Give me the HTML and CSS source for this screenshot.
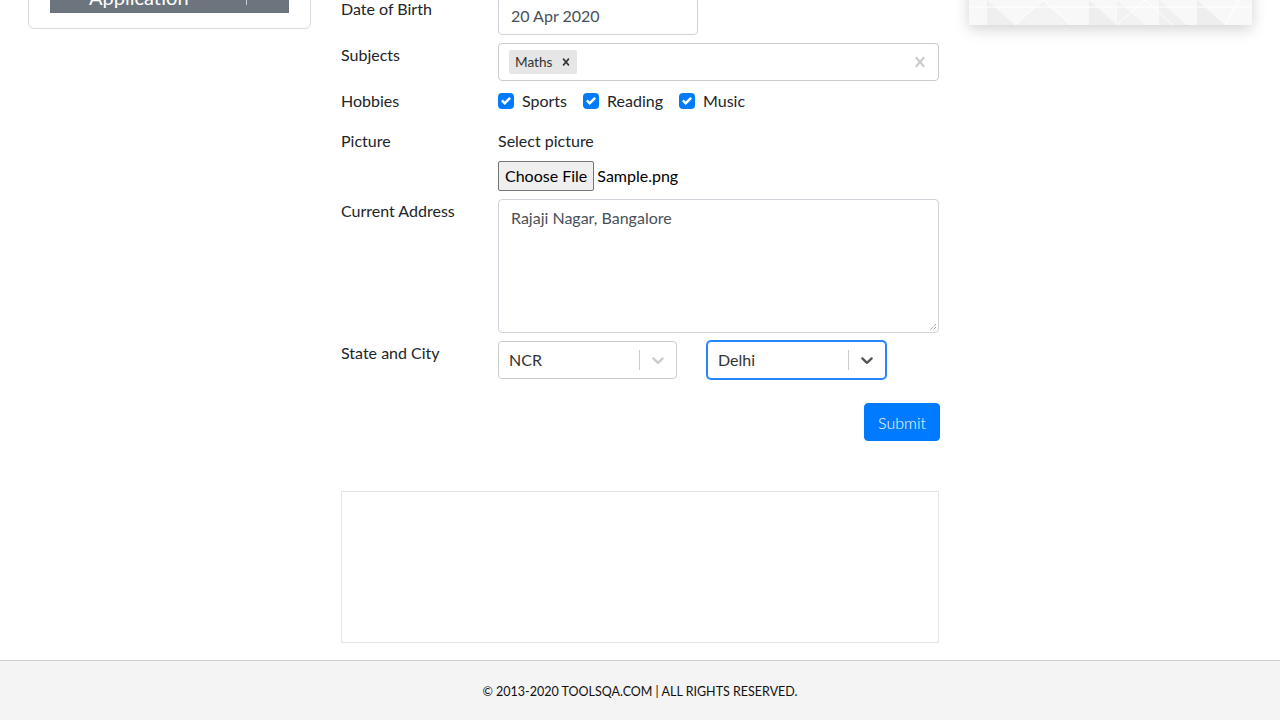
FILE: index.html
```html
<!DOCTYPE html>
<html lang="en">
<head>
<meta charset="utf-8">
<title>Practice Form</title>
<link rel="stylesheet" href="styles.css">
</head>
<body>
<div class="shell">
  <aside class="sidebar">
    <div class="side-card">
      <div class="side-header">
        <span class="side-title">Application</span>
        <span class="side-icon"></span>
      </div>
    </div>
  </aside>

  <main class="main">
    <form class="form">
      <div class="row">
        <label class="lbl">Date of Birth</label>
        <div class="ctl"><div class="input date">20 Apr 2020</div></div>
      </div>

      <div class="row">
        <label class="lbl">Subjects</label>
        <div class="ctl">
          <div class="select multi">
            <div class="values">
              <span class="tag"><span class="tag-label">Maths</span><span class="tag-remove"><svg width="14" height="14" viewBox="0 0 20 20"><path d="M14.348 14.849c-0.469 0.469-1.229 0.469-1.697 0l-2.651-3.030-2.651 3.029c-0.469 0.469-1.229 0.469-1.697 0-0.469-0.469-0.469-1.229 0-1.697l2.758-3.15-2.759-3.152c-0.469-0.469-0.469-1.228 0-1.697s1.228-0.469 1.697 0l2.652 3.031 2.651-3.031c0.469-0.469 1.228-0.469 1.697 0s0.469 1.229 0 1.697l-2.758 3.152 2.758 3.15c0.469 0.469 0.469 1.229 0 1.698z" fill="#333"/></svg></span></span>
            </div>
            <div class="indicator"><svg width="20" height="20" viewBox="0 0 20 20"><path d="M14.348 14.849c-0.469 0.469-1.229 0.469-1.697 0l-2.651-3.030-2.651 3.029c-0.469 0.469-1.229 0.469-1.697 0-0.469-0.469-0.469-1.229 0-1.697l2.758-3.15-2.759-3.152c-0.469-0.469-0.469-1.228 0-1.697s1.228-0.469 1.697 0l2.652 3.031 2.651-3.031c0.469-0.469 1.228-0.469 1.697 0s0.469 1.229 0 1.697l-2.758 3.152 2.758 3.15c0.469 0.469 0.469 1.229 0 1.698z" fill="#ccc"/></svg></div>
          </div>
        </div>
      </div>

      <div class="row row-hobbies">
        <label class="lbl">Hobbies</label>
        <div class="ctl checks">
          <span class="check"><span class="box"><svg width="10" height="10" viewBox="0 0 8 8"><path d="M6.564.75l-3.59 3.612-1.538-1.55L0 4.26 2.974 7.25 8 2.193z" fill="#fff"/></svg></span>Sports</span>
          <span class="check"><span class="box"><svg width="10" height="10" viewBox="0 0 8 8"><path d="M6.564.75l-3.59 3.612-1.538-1.55L0 4.26 2.974 7.25 8 2.193z" fill="#fff"/></svg></span>Reading</span>
          <span class="check"><span class="box"><svg width="10" height="10" viewBox="0 0 8 8"><path d="M6.564.75l-3.59 3.612-1.538-1.55L0 4.26 2.974 7.25 8 2.193z" fill="#fff"/></svg></span>Music</span>
        </div>
      </div>

      <div class="row">
        <label class="lbl">Picture</label>
        <div class="ctl picture">
          <div class="pic-label">Select picture</div>
          <div class="file"><span class="file-btn">Choose File</span><span class="file-name">Sample.png</span></div>
        </div>
      </div>

      <div class="row">
        <label class="lbl">Current Address</label>
        <div class="ctl"><div class="textarea">Rajaji Nagar, Bangalore<svg class="grip" width="9" height="9" viewBox="0 0 9 9"><path d="M8 2 L2 8 M8 5 L5 8" stroke="#777" stroke-width="1" stroke-dasharray="1 1"/></svg></div></div>
      </div>

      <div class="row">
        <label class="lbl">State and City</label>
        <div class="ctl selects">
          <div class="select single">
            <div class="single-value">NCR</div>
            <span class="sep"></span>
            <div class="indicator"><svg width="20" height="20" viewBox="0 0 20 20"><path d="M4.516 7.548c0.436-0.446 1.043-0.481 1.576 0l3.908 3.747 3.908-3.747c0.533-0.481 1.141-0.446 1.574 0 0.436 0.445 0.408 1.197 0 1.615-0.406 0.418-4.695 4.502-4.695 4.502-0.217 0.223-0.502 0.335-0.787 0.335s-0.57-0.112-0.789-0.335c0 0-4.287-4.084-4.695-4.502s-0.436-1.17 0-1.615z" fill="#ccc"/></svg></div>
          </div>
          <div class="select single focused">
            <div class="single-value">Delhi</div>
            <span class="sep"></span>
            <div class="indicator"><svg width="20" height="20" viewBox="0 0 20 20"><path d="M4.516 7.548c0.436-0.446 1.043-0.481 1.576 0l3.908 3.747 3.908-3.747c0.533-0.481 1.141-0.446 1.574 0 0.436 0.445 0.408 1.197 0 1.615-0.406 0.418-4.695 4.502-4.695 4.502-0.217 0.223-0.502 0.335-0.787 0.335s-0.57-0.112-0.789-0.335c0 0-4.287-4.084-4.695-4.502s-0.436-1.17 0-1.615z" fill="#555"/></svg></div>
          </div>
        </div>
      </div>

      <div class="submit-row"><button type="button" class="submit">Submit</button></div>
    </form>
    <div class="ad-box"></div>
  </main>

  <aside class="right">
    <div class="promo">
      <svg class="pattern" width="283" height="68" viewBox="0 0 283 68" preserveAspectRatio="none">
        <rect width="283" height="68" fill="#f8f8f8"/>
        <polygon points="18,43 46,68 18,68" fill="#efefef"/>
        <polygon points="46,68 74,43 102,68" fill="#f3f3f3"/>
        <polygon points="120,43 148,68 120,68" fill="#eeeeee"/>
        <polygon points="148,43 176,68 148,68" fill="#f2f2f2"/>
        <polygon points="190,43 218,68 190,68" fill="#f0f0f0"/>
        <polygon points="228,43 256,68 228,68" fill="#eeeeee"/>
        <path d="M0 50 L283 50 M46 68 L74 43 L102 68 M148 68 L176 43 L204 68 M256 68 L270 43" stroke="#fff" stroke-width="1" fill="none"/>
      </svg>
    </div>
  </aside>
</div>

<footer class="footer">
  <span>© 2013-2020 TOOLSQA.COM | ALL RIGHTS RESERVED.</span>
</footer>
</body>
</html>
```

FILE: styles.css
```css
* { box-sizing: border-box; }
html, body { margin: 0; padding: 0; }
body {
  width: 1280px;
  height: 720px;
  overflow: hidden;
  background: #fff;
  font-family: Lato, "Liberation Sans", sans-serif;
  font-size: 16px;
  color: #212529;
  line-height: 24px;
  display: flex;
  flex-direction: column;
}

.shell {
  display: flex;
  align-items: flex-start;
  gap: 30px;
  padding: 0 28px;
  margin-top: -43px;
  flex: 1;
}

.sidebar { width: 283px; flex: none; }
.side-card {
  border: 1px solid #dcdcdc;
  border-radius: 6px;
  padding: 15px 21px;
}
.side-header {
  height: 40px;
  background: #6c757d;
  display: flex;
  align-items: flex-end;
  padding-left: 39px;
  padding-right: 42px;
  justify-content: space-between;
  overflow: hidden;
}
.side-title {
  color: #fff;
  font-size: 20px;
  line-height: 20px;
  margin-bottom: 6px;
}
.side-icon {
  width: 1px;
  height: 8px;
  background: #c9ccd0;
  margin-bottom: 8px;
}

.main { width: 598px; flex: none; padding-top: 40px; }
.form { display: flex; flex-direction: column; gap: 8px; }
.row {
  display: grid;
  grid-template-columns: 157px 1fr;
  align-items: start;
}
.lbl { line-height: 24px; }
.ctl { min-width: 0; }

.input {
  height: 38px;
  border: 1px solid #ced4da;
  border-radius: 4px;
  padding: 6px 12px;
  color: #495057;
  line-height: 24px;
}
.date { width: 200px; }

.select {
  display: flex;
  align-items: center;
  height: 38px;
  border: 1px solid #ccc;
  border-radius: 4px;
  background: #fff;
}
.values { flex: 1; display: flex; padding: 2px 8px; }
.tag {
  display: flex;
  align-items: center;
  background: #e6e6e6;
  border-radius: 2px;
  margin: 2px;
  height: 24px;
}
.tag-label {
  font-size: 13.6px;
  color: #333;
  padding: 3px 3px 3px 6px;
  line-height: 18px;
}
.tag-remove { display: flex; align-items: center; padding: 0 4px; height: 100%; }
.indicator { display: flex; padding: 8px; }
.sep { width: 1px; height: 20px; background: #ccc; }
.single-value { flex: 1; padding: 2px 10px; color: #333; }
.focused { border-color: #2684ff; box-shadow: 0 0 0 1px #2684ff; }

.row-hobbies { min-height: 32px; }
.checks { display: flex; line-height: 24px; }
.check { display: flex; align-items: center; margin-right: 16px; }
.box {
  width: 16px; height: 16px;
  background: #007bff;
  border-radius: 4px;
  display: flex; align-items: center; justify-content: center;
  margin-right: 8px;
}

.picture { display: flex; flex-direction: column; gap: 8px; }
.file { display: flex; align-items: center; }
.file-btn {
  height: 30px;
  padding: 0 6px;
  background: #efefef;
  border: 1px solid #767676;
  border-radius: 2px;
  color: #000;
  line-height: 28px;
  margin-right: 3px;
}
.file-name { color: #000; }

.textarea {
  position: relative;
  height: 134px;
  border: 1px solid #ced4da;
  border-radius: 4px;
  padding: 6px 12px;
  color: #495057;
}
.grip { position: absolute; right: 1px; bottom: 1px; }

.selects { display: flex; gap: 30px; }
.single { width: 179px; }

.submit-row { display: flex; justify-content: flex-end; margin-top: 16px; }
.submit {
  background: #007bff;
  border: 1px solid #007bff;
  color: #fff;
  border-radius: 4px;
  font-family: inherit;
  font-size: 16px;
  font-weight: 300;
  height: 38px;
  padding: 0 13px;
  margin-right: -1px;
}

.ad-box {
  margin-top: 50px;
  height: 152px;
  border: 1px solid #e5e5e5;
}

.right { width: 283px; flex: none; }
.promo {
  height: 68px;
  box-shadow: 0 4px 14px rgba(0,0,0,0.18);
  overflow: hidden;
}
.pattern { display: block; }

.footer {
  height: 60px;
  flex: none;
  background: #f4f4f4;
  border-top: 1px solid #ccc;
  display: flex;
  align-items: center;
  justify-content: center;
  font-size: 12.5px;
  color: #111;
  padding-top: 2px;
}
```
